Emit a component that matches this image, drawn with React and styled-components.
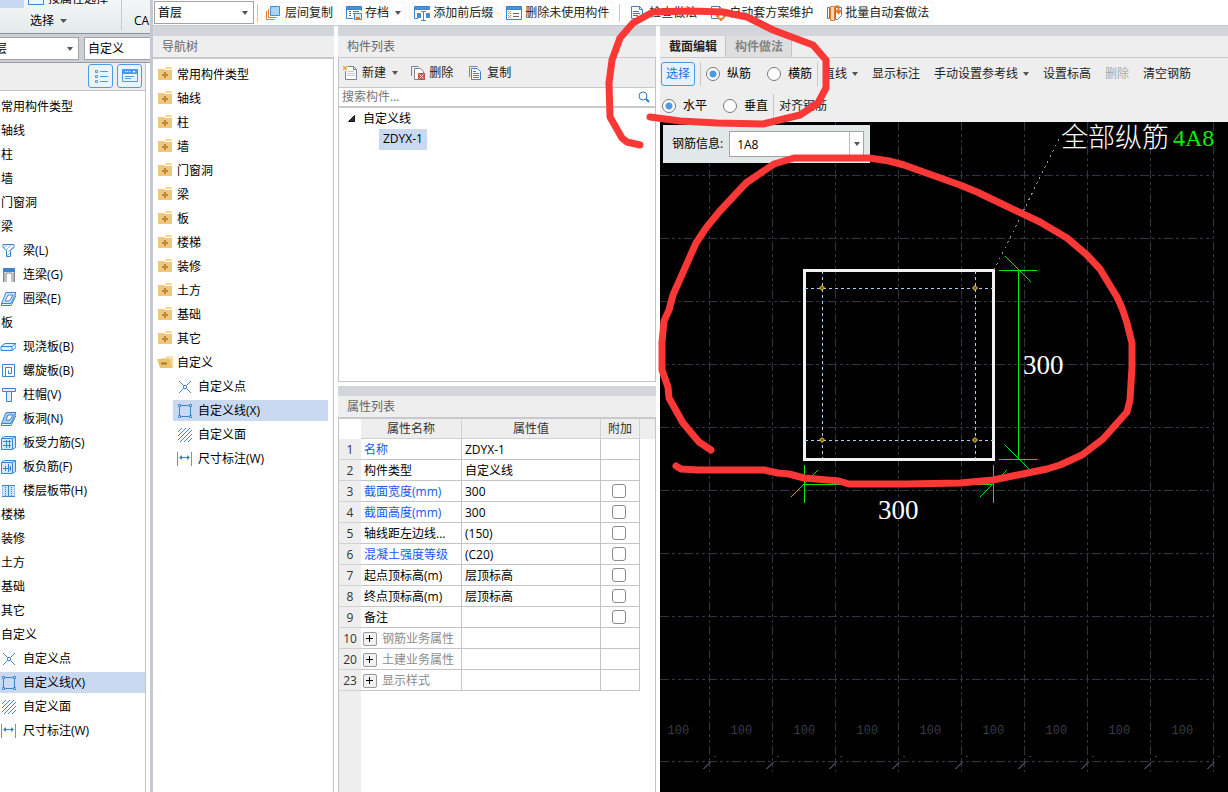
import { useState } from "react";
import styled, { createGlobalStyle } from "styled-components";

const GlobalStyle = createGlobalStyle`
  * {
    box-sizing: border-box;
  }
  body {
    margin: 0;
    overflow: hidden;
  }
  body, button, input, select, table {
    font-family: "Open Sans", "Noto Sans CJK SC", sans-serif;
    font-size: 12px;
    line-height: 18px;
    color: #000;
  }
  ul {
    margin: 0;
    padding: 0;
    list-style: none;
  }
  svg {
    display: block;
    flex: none;
  }
`;

const Desktop = styled.div`
  position: relative;
  display: grid;
  grid-template-columns: 150px 1fr;
  height: 100vh;
  background: #fff;
  overflow: hidden;
`;

/* ---------- shared parts ---------- */

const SelectWrap = styled.div`
  display: grid;
  grid-template-columns: 1fr ${(props) => (props.$split ? "14px" : "11px")};
  align-items: center;
  width: ${(props) => props.$width}px;
  height: ${(props) => props.$height || 23}px;
  margin-left: ${(props) => props.$shift || 0}px;
  border: 1px solid #a3a3a3;
  background: #fff;
  flex: none;
  select {
    grid-area: 1 / 1 / 2 / 3;
    appearance: none;
    width: 100%;
    height: 100%;
    border: 0;
    padding: ${(props) => (props.$split ? "2px 7px 0" : "0 3px")};
    background: transparent;
    outline: none;
  }
  > span {
    grid-area: 1 / 2 / 2 / 3;
    display: flex;
    align-items: center;
    justify-content: ${(props) => (props.$split ? "center" : "flex-start")};
    height: 100%;
    pointer-events: none;
    border-left: ${(props) => (props.$split ? "1px solid #bbb" : "0")};
  }
`;

const Arrow = ({ size = 6, color = "#555" }) => (
  <svg width={size} height="4" viewBox="0 0 6 4" preserveAspectRatio="none">
    <path d="M0 0h6L3 4z" fill={color} />
  </svg>
);

const Select = ({ label, value, ...rest }) => (
  <SelectWrap {...rest}>
    <select aria-label={label} defaultValue={value}>
      <option>{value}</option>
    </select>
    <span>
      <Arrow />
    </span>
  </SelectWrap>
);

const PlainButton = styled.button`
  display: flex;
  align-items: center;
  gap: ${(props) => props.$gap || 0}px;
  padding: 0;
  border: 0;
  background: none;
  white-space: nowrap;
  color: ${(props) => (props.disabled ? "#aaa" : "#222")};
`;

const Divider = styled.span`
  width: 1px;
  height: ${(props) => props.$height || 18}px;
  margin: 0 ${(props) => props.$space || 0}px;
  background: #c8c8c8;
  flex: none;
`;

/* ---------- icons ---------- */

const BLUE = "#3c84d0";

const Ico = ({ children, w = 16, h = 16 }) => (
  <svg width={w} height={h} viewBox={`0 0 ${w} ${h}`} fill="none" stroke={BLUE}>
    {children}
  </svg>
);

const FolderIcon = ({ open }) =>
  open ? (
    <Ico>
      <path d="M4 3h12v10H4z" fill="#f4d79b" stroke="none" />
      <path d="M9 1h7v2H9z" fill="#f7e3b8" stroke="none" />
      <path d="M0 4h13l2 9H3z" fill="#ecc271" stroke="none" />
      <path d="M4 8.500h6" stroke="#a8742a" strokeWidth="2" />
    </Ico>
  ) : (
    <Ico>
      <path d="M8 1l1-1h5l1 1v1H8z" fill="#f2d595" stroke="none" />
      <path d="M1 2h6l1 1h7v10H1z" fill="#eec77c" stroke="none" />
      <path d="M5 8h6M8 5v6" stroke="#bf8638" strokeWidth="2" />
    </Ico>
  );

const icons = {
  beam: (
    <Ico>
      <path d="M3 1.500h11v3l-3.500 3v6h-4v-6L3 4.500z" />
      <path d="M4 5l3-3M6 7l5-5M8 9l5-5M7 13l3-3" stroke="#8fbbe6" />
    </Ico>
  ),
  link: (
    <Ico>
      <path d="M3.500 15V2h11v13M6 15V6h6v9" stroke="#7d858f" />
      <path d="M4.500 15V4M13.500 15V4" stroke="#b3bac2" />
      <path d="M3.500 1.500h11v3h-11z" fill={BLUE} />
    </Ico>
  ),
  ring: (
    <Ico>
      <path d="M6 1.500h10l-5 11H1.500zM8 4h5l-3.500 6H5z" fill="#d6e7f8" fillRule="evenodd" />
      <path d="M1.500 12.500v2h9.500l5-10v-3" />
    </Ico>
  ),
  slab: (
    <Ico>
      <path d="M1 7.500l4-3h11l-4 3zM1 7.500v4h11v-4M12 11.500l4-3v-4" fill="#e2eefa" />
    </Ico>
  ),
  spiral: (
    <Ico>
      <path d="M2.500 1.500h12v12h-12z" />
      <path d="M5.500 13V4.500h6v6h-3V7.500" />
    </Ico>
  ),
  cap: (
    <Ico>
      <path d="M2.500 1.500h13v3h-4v10h-5v-10h-4z" fill="#e2eefa" />
      <path d="M6.500 4.500h5" />
    </Ico>
  ),
  hole: (
    <Ico>
      <path d="M6 1.500h10l-5 11H1.500zM8 4h5l-3 5H6z" fill="#a8cbee" fillRule="evenodd" />
      <path d="M1.500 12.500v2h9.500l5-10v-3" />
    </Ico>
  ),
  rebarS: (
    <Ico>
      <path d="M1.500 3.500l3-2h11v11l-3 2h-11z" fill="#d6e7f8" />
      <path d="M1.500 3.500h11v11M12.500 3.500l3-2M3 6.500h8M3 10.500h8M6.500 5v8M9.500 5v8" />
    </Ico>
  ),
  rebarF: (
    <Ico>
      <path d="M1.500 3.500l3-2h11v11l-3 2h-11z" fill="#d6e7f8" />
      <path d="M1.500 3.500h11v11M12.500 3.500l3-2M3 9.500h8M5.500 7v5M8.500 5v8M10.500 7v5" />
    </Ico>
  ),
  strip: (
    <Ico>
      <path d="M2.500 2.500h12v11h-12z" fill="#cfe3f7" stroke="#9cc3ea" />
      <path d="M2 2.500h13M2 13.500h13M8.500 3v10" />
      <path d="M5.500 4v9M11.500 4v9" strokeDasharray="1 1" />
    </Ico>
  ),
  point: (
    <Ico>
      <path d="M7.500 6.500h3v3h-3zM7 6L3 2M11 6l4-4M7 10l-4 4M11 10l4 4" />
    </Ico>
  ),
  line: (
    <Ico>
      <path d="M3.500 2.500h11v11h-11z" />
      <path
        d="M2.500 1.500h2v2h-2zM13.500 1.500h2v2h-2zM2.500 12.500h2v2h-2zM13.500 12.500h2v2h-2z"
        fill="#fff"
      />
    </Ico>
  ),
  area: (
    <Ico>
      <path d="M2 5l4-4M2 9l8-8M2 13l12-12M4 15L16 3M8 15l8-8M12 15l4-4" />
    </Ico>
  ),
  dim: (
    <Ico>
      <path d="M1.500 1v14M15.500 1v14" stroke="#8a8f96" />
      <path d="M4 6.500h9" />
      <path d="M6 4v5L3 6.500zM11 4v5l3-2.500z" fill={BLUE} stroke="none" />
    </Ico>
  ),
  copyLayer: (
    <Ico>
      <path d="M4.500 1.500h9v9h-9z" fill="#a9d3f8" stroke="#3f8ee0" />
      <path d="M2.500 4v8.500h8M.5 6v8.500h8" stroke="#e07b28" />
    </Ico>
  ),
  archive: (
    <Ico>
      <path d="M.5 1.500h15v3H.5z" fill="#4a90dc" />
      <path d="M.5 4v9.500H7M15.500 4v2" />
      <path d="M3 6.500h2M3 8.500h2M3 10.500h2M7 6.500h6M7 8.500h2" stroke="#5e6a78" />
      <path d="M8.500 8.500h7v6h-7z" fill="#dbe9f8" />
      <path d="M10 12h4v3h-4z" fill="#e07b28" stroke="none" />
    </Ico>
  ),
  affix: (
    <Ico>
      <path d="M.5 1.500h15v3H.5z" fill="#4a90dc" />
      <path d="M.5 4v9.500H4" />
      <path d="M3.500 8.500h3v4h-3zM12.500 8.500h3v4h-3z" fill="#4a90dc" />
      <path d="M9.500 7v8M7 6.500h5M7 15.500h5" />
    </Ico>
  ),
  unused: (
    <Ico>
      <path d="M.5 1.500h15v13H.5z" fill="#fff" />
      <path d="M.5 1.500h15v3H.5z" fill="#4a90dc" />
      <path d="M2 6l3 3M5 6L2 9M2 10l3 3M5 10l-3 3" stroke="#e8963c" />
      <path d="M7 8.500h6M7 11.500h6" stroke="#5e6a78" />
    </Ico>
  ),
  check: (
    <Ico>
      <path d="M1.500 1.500h8l3 3v9h-11zM9.500 1.500v3h3" fill="#fff" />
      <path d="M3 6.500h6M3 8.500h7M3 10.500h5" stroke="#5e6a78" />
      <path d="M7 11l3 3 4-5" stroke="#e07b28" strokeWidth="2" />
    </Ico>
  ),
  plan: (
    <Ico>
      <path d="M1.500 1.500h8l3 3v9h-11zM9.500 1.500v3h3" fill="#fff" />
      <path d="M3 6.500h4M3 8.500h4" stroke="#5e6a78" />
      <circle cx="11" cy="11" r="3" fill="#fff" stroke="#e8862e" strokeWidth="2" />
      <path d="M11 6v2M11 14v2M6 11h2M14 11h2" stroke="#e8862e" strokeWidth="2" />
    </Ico>
  ),
  batch: (
    <Ico>
      <path d="M1.500 2.500h2v11h-2zM9.500 2.500h6v8l-4 4h-2z" fill="#fff" />
      <path d="M4.500 1.500h4v14h-4z" fill="#fbd9bb" stroke="#e07b28" />
      <path d="M9 1.500h3.500V8M10 5.500L12.500 8 15 5.500" stroke="#e07b28" strokeWidth="2" />
    </Ico>
  ),
  create: (
    <Ico>
      <path d="M4.500 1.500h6l3 3v10h-11V6" fill="#fff" stroke="#7c8692" />
      <path d="M10.500 1.500v3h3" stroke="#7c8692" />
      <path d="M5 6.500h6M4 8.500h8M4 10.500h8" stroke="#c3c9d0" />
      <path d="M0 1l4 4M4 1L0 5M2 1v4M0 3h4" stroke="#eea23a" />
    </Ico>
  ),
  remove: (
    <Ico>
      <path d="M1.500 11V1.500h7" stroke="#7c8692" />
      <path d="M4.500 3.500h6l3 3v8h-9z" fill="#fff" stroke="#7c8692" />
      <path d="M8 8h7v7H8z" fill="#c8524c" stroke="none" />
      <path d="M9.500 9.500l4 4M13.500 9.500l-4 4" stroke="#fff" />
    </Ico>
  ),
  copy: (
    <Ico>
      <path d="M1.500 12V1.500h8" stroke="#7c8692" />
      <path d="M3.500 3.500h6l3 3v8h-9z" fill="#fff" />
      <path d="M5 6.500h3M5 8.500h6M5 10.500h6M5 12.500h6" />
    </Ico>
  ),
  search: (
    <Ico w={12} h={12}>
      <circle cx="5" cy="5" r="4" stroke="#2d7fc8" />
      <path d="M8 8l3 3" stroke="#2d7fc8" strokeWidth="2" />
    </Ico>
  ),
};

/* ---------- window on the left, partly covered ---------- */

const SideWindow = styled.aside`
  display: flex;
  flex-direction: column;
  overflow: hidden;
  min-width: 0;
`;

const Ribbon = styled.div`
  display: grid;
  grid-template-columns: 122px 1fr;
  height: 34px;
  border-bottom: 1px solid #8d9499;
  background: linear-gradient(#f3f7f8, #e4eaeb);
  overflow: hidden;
`;

const RibbonGroup = styled.div`
  display: flex;
  flex-direction: column;
  justify-content: flex-end;
  height: 30px;
  border-right: ${(props) => (props.$last ? 0 : 1)}px solid #c4cacc;
  white-space: nowrap;
`;

const RibbonTop = styled.div`
  display: flex;
  align-items: center;
  height: 18px;
  margin-bottom: 4px;
  gap: 4px;
`;

const RibbonActive = styled.span`
  width: 24px;
  height: 18px;
  background: #c8d7f1;
`;

const RibbonTitle = styled.div`
  display: flex;
  align-items: center;
  gap: 6px;
  padding-left: ${(props) => props.$pad}px;
`;

const SideFilters = styled.div`
  display: flex;
  gap: 5px;
  height: 29px;
  padding: 3px 0;
  background: #ccd0d6;
  border-bottom: 1px solid #979da3;
  overflow: hidden;
`;

const ViewSwitch = styled.div`
  display: flex;
  justify-content: flex-end;
  gap: 4px;
  width: 146px;
  height: 28px;
  padding: 1px 3px 2px;
  background: #eee;
  border-right: 1px solid #c4c4c8;
  border-bottom: 1px solid #c4c4c8;
`;

const ViewButton = styled.button`
  display: grid;
  place-items: center;
  width: 25px;
  height: 24px;
  padding: 0;
  border: 1px solid #4b9bea;
  border-radius: 3px;
  background: #e9f4fe;
`;

const SideList = styled.ul`
  flex: 1;
  width: 146px;
  padding-top: 5px;
  border-right: 1px solid #c4c4c8;
`;

const SideRow = styled.li`
  display: flex;
  align-items: center;
  gap: 7px;
  height: 21px;
  margin-bottom: 3px;
  padding-left: ${(props) => (props.$icon ? 0 : 1)}px;
  white-space: nowrap;
  background: ${(props) => (props.$selected ? "#c9d9f2" : "none")};
`;

const sideItems = [
  ["常用构件类型"],
  ["轴线"],
  ["柱"],
  ["墙"],
  ["门窗洞"],
  ["梁"],
  ["梁(L)", "beam"],
  ["连梁(G)", "link"],
  ["圈梁(E)", "ring"],
  ["板"],
  ["现浇板(B)", "slab"],
  ["螺旋板(B)", "spiral"],
  ["柱帽(V)", "cap"],
  ["板洞(N)", "hole"],
  ["板受力筋(S)", "rebarS"],
  ["板负筋(F)", "rebarF"],
  ["楼层板带(H)", "strip"],
  ["楼梯"],
  ["装修"],
  ["土方"],
  ["基础"],
  ["其它"],
  ["自定义"],
  ["自定义点", "point"],
  ["自定义线(X)", "line"],
  ["自定义面", "area"],
  ["尺寸标注(W)", "dim"],
];

const Side = () => (
  <SideWindow>
    <Ribbon>
      <RibbonGroup>
        <RibbonTop>
          <RibbonActive />
          <Ico>
            <path d="M.5.500h15v13H.5z" />
          </Ico>
          按属性选择
        </RibbonTop>
        <RibbonTitle $pad={30}>
          选择 <Arrow size={7} />
        </RibbonTitle>
      </RibbonGroup>
      <RibbonGroup $last>
        <RibbonTitle $pad={12}>CA</RibbonTitle>
      </RibbonGroup>
    </Ribbon>
    <SideFilters>
      <Select label="楼层" value="首层" $width={100} $shift={-21} />
      <Select label="构件" value="自定义" $width={100} />
    </SideFilters>
    <ViewSwitch>
      <ViewButton aria-label="列表">
        <Ico w={14} h={14}>
          <path
            d="M1.500 1.500h2v2h-2zM1.500 6.500h2v2h-2zM1.500 11.500h2v2h-2z"
            stroke="#4b9bea"
          />
          <path d="M6 2.500h8M6 7.500h8M6 12.500h8" stroke="#4b9bea" />
        </Ico>
      </ViewButton>
      <ViewButton aria-label="窗口">
        <Ico>
          <path d="M.5 1.500h15v12H.5z" stroke="#4b9bea" />
          <path d="M1 2h14v4H1z" fill="#4b9bea" stroke="none" />
          <path d="M3 3.500h5" stroke="#fff" strokeDasharray="1 1" />
          <path d="M10.500 3h3l-1.500 2z" fill="#fff" stroke="none" />
          <path d="M3 8.500h9M3 10.500h6" stroke="#4b9bea" />
        </Ico>
      </ViewButton>
    </ViewSwitch>
    <SideList>
      {sideItems.map(([text, icon]) => (
        <SideRow key={text} $icon={icon} $selected={icon === "line"}>
          {icon && icons[icon]}
          {text}
        </SideRow>
      ))}
    </SideList>
  </SideWindow>
);

/* ---------- main window ---------- */

const MainWindow = styled.main`
  display: flex;
  flex-direction: column;
  min-width: 0;
  border-left: 3px solid #c5c8d0;
  background: #fff;
`;

const TopBar = styled.header`
  display: flex;
  align-items: center;
  gap: 3px;
  height: 26px;
  padding-left: 1px;
  border-bottom: 1px solid #c9c9cf;
`;

const TopButton = styled(PlainButton)`
  height: 21px;
  padding: 0 5px;
  border-radius: 3px;
  box-shadow: inset 0 0 0 1px #f7f7f7;
`;

const Workspace = styled.div`
  flex: 1;
  display: grid;
  grid-template-columns: 181px 318px 1fr;
  gap: 4px;
  min-height: 0;
`;

const Panel = styled.section`
  display: flex;
  flex-direction: column;
  min-width: 0;
  min-height: 0;
  border-top: 10px solid #d4d4db;
`;

const PanelTitle = styled.h2`
  margin: 0;
  height: ${(props) => (props.$thick ? 23 : 22)}px;
  padding: 1px 9px 0;
  border-bottom: ${(props) => (props.$thick ? 2 : 1)}px solid #c8c8ce;
  background: #eee;
  color: #666;
  font-size: 12px;
  font-weight: 400;
  line-height: 20px;
`;

const NavTree = styled.ul`
  flex: 1;
  padding: 5px 5px 0 4px;
  border-right: 1px solid #c4c4c8;
`;

const NavRow = styled.li`
  display: flex;
  align-items: center;
  gap: ${(props) => (props.$child ? 6 : 4)}px;
  height: 21px;
  margin: 0 0 3px ${(props) => (props.$child ? 16 : 0)}px;
  padding-left: ${(props) => (props.$child ? 3 : 0)}px;
  background: ${(props) => (props.$selected ? "#c9d9f2" : "none")};
`;

const navItems = [
  "常用构件类型",
  "轴线",
  "柱",
  "墙",
  "门窗洞",
  "梁",
  "板",
  "楼梯",
  "装修",
  "土方",
  "基础",
  "其它",
];
const customItems = sideItems.slice(-4);

const Middle = styled.div`
  display: grid;
  grid-template-rows: 356px 1fr;
  gap: 4px;
  min-height: 0;
`;

const PanelBody = styled.div`
  flex: 1;
  border: solid #c4c4c8;
  border-width: 0 1px ${(props) => (props.$closed ? 1 : 0)}px;
  background: ${(props) =>
    props.$gutter ? "linear-gradient(to right, #eee 22px, #fff 22px)" : "#fff"};
`;

const ListTools = styled.div`
  display: flex;
  align-items: center;
  gap: 12px;
  height: 30px;
  padding-left: 4px;
  border-bottom: 1px solid #c8c8ce;
  background: #eee;
`;

const SearchBox = styled.label`
  display: flex;
  align-items: center;
  height: 20px;
  padding: 0 5px 0 3px;
  border-bottom: 2px solid #c8c8ce;
  input {
    flex: 1;
    min-width: 0;
    height: 18px;
    border: 0;
    padding: 0;
    outline: none;
  }
  input::placeholder {
    color: #757575;
  }
`;

const TreeRow = styled.li`
  display: flex;
  align-items: center;
  gap: 8px;
  height: 21px;
  padding-left: ${(props) => (props.$child ? 40 : 9)}px;
`;

const TreeSelected = styled.span`
  height: 21px;
  padding: 1px 4px;
  background: #c9d9f2;
`;

const PropTable = styled.table`
  width: 100%;
  table-layout: fixed;
  border-spacing: 0;
  th,
  td {
    height: 21px;
    padding: 2px 0 0;
    font-weight: 400;
    line-height: 18px;
    white-space: nowrap;
    overflow: hidden;
  }
  thead th {
    height: 20px;
    padding: 1px 0 0;
    background: #eee;
    color: #333;
    border-right: 1px solid #d2d2d6;
    border-bottom: 1px solid #d2d2d6;
  }
  thead th:first-child {
    background: #fff;
    border: 0;
  }
  thead th:last-child {
    border: 0;
  }
  tbody th {
    background: #eee;
    color: #333;
    border-bottom: 1px solid #d2d2d6;
  }
  tbody td {
    border-right: 1px solid #c4c4cc;
    border-bottom: 1px solid #c4c4cc;
    padding-left: 3px;
  }
  tbody td:nth-child(4) {
    padding: 0 2px 0 0;
  }
  tbody td:last-child {
    border: 0;
  }
`;

const PropName = styled.span`
  display: flex;
  align-items: center;
  gap: 5px;
  color: ${(props) => props.$color};
`;

const Expander = styled.button`
  display: grid;
  place-items: center;
  width: 14px;
  height: 14px;
  margin-left: -1px;
  padding: 0;
  border: 1px solid #999;
  border-radius: 2px;
  background: #f2f2f2;
`;

const Tick = styled.input`
  appearance: none;
  display: block;
  width: 14px;
  height: 14px;
  margin: 0 auto;
  border: 1px solid #8a8a8a;
  border-radius: 3px;
  background: #fff;
  &:checked {
    background: #4b9bea;
  }
`;

const props = [
  { no: 1, name: "名称", value: "ZDYX-1", kind: "key" },
  { no: 2, name: "构件类型", value: "自定义线" },
  { no: 3, name: "截面宽度(mm)", value: "300", kind: "key", tick: true },
  { no: 4, name: "截面高度(mm)", value: "300", kind: "key", tick: true },
  { no: 5, name: "轴线距左边线...", value: "(150)", tick: true },
  { no: 6, name: "混凝土强度等级", value: "(C20)", kind: "key", tick: true },
  { no: 7, name: "起点顶标高(m)", value: "层顶标高", tick: true },
  { no: 8, name: "终点顶标高(m)", value: "层顶标高", tick: true },
  { no: 9, name: "备注", value: "", tick: true },
  { no: 10, name: "钢筋业务属性", kind: "group" },
  { no: 20, name: "土建业务属性", kind: "group" },
  { no: 23, name: "显示样式", kind: "group" },
];
const nameColors = { key: "#1459f5", group: "#8c8c8c" };

/* ---------- section editor ---------- */

const Tabs = styled.div`
  display: flex;
  height: 22px;
  background: #eee;
  border-bottom: 1px solid #c8c8ce;
`;

const Tab = styled.button`
  padding: 0 8px 0 9px;
  border: 0;
  border-right: 1px solid #c4c4c8;
  background: ${(props) => (props.$active ? "#eee" : "#dedede")};
  color: ${(props) => (props.$active ? "#222" : "#858585")};
  font-weight: 700;
`;

const EditorTools = styled.div`
  display: flex;
  align-items: center;
  gap: 5px;
  height: 32px;
  padding-left: ${(props) => props.$pad}px;
  background: #eee;
  overflow: hidden;
`;

const Group = styled.div`
  display: flex;
  align-items: center;
  gap: ${(props) => props.$gap}px;
`;

const PickButton = styled.button`
  width: 34px;
  height: 24px;
  padding: 0;
  border: 1px solid #4b9bea;
  border-radius: 3px;
  background: #e6f2fe;
  color: #1b74d8;
`;

const RadioLabel = styled.label`
  display: flex;
  align-items: center;
  gap: 7px;
  white-space: nowrap;
  input {
    appearance: none;
    width: 14px;
    height: 14px;
    margin: 0;
    border: 1px solid #777;
    border-radius: 50%;
    background: #fff;
  }
  input:checked {
    background: radial-gradient(circle, #4b9bea 3px, #fff 4px);
  }
`;

const CanvasArea = styled.div`
  position: relative;
  flex: 1;
  min-height: 0;
  background: #000;
  overflow: hidden;
`;

const RebarInfo = styled.label`
  position: absolute;
  left: 3px;
  top: 3px;
  display: flex;
  align-items: center;
  gap: 6px;
  height: 38px;
  padding: 0 6px 0 9px;
  background: #e2e8ea;
  white-space: nowrap;
`;

const Sheet = styled.svg`
  width: 100%;
  height: 100%;
  shape-rendering: crispEdges;
  .grid {
    stroke: #2f3642;
    stroke-dasharray: 9 3 3 3 3 3;
  }
  .tickText {
    font: 12px "Liberation Mono", monospace;
    fill: #363d49;
  }
  .size {
    font: 27px "Liberation Serif", serif;
    fill: #fff;
  }
  .name {
    font: 27px "Noto Sans CJK SC", sans-serif;
    font-weight: 300;
    fill: #fff;
  }
  .code {
    font: 24px "Liberation Serif", serif;
    fill: #00f000;
  }
`;

const columns = [0, 1, 2, 3, 4, 5, 6, 7, 8].map((n) => 49.5 + n * 63);
const rows = [0, 1, 2, 3, 4, 5, 6, 7, 8].map((n) => 53.5 + n * 63);

const SectionSheet = () => (
  <Sheet>
    {columns.map((x) => (
      <g key={x}>
        <path className="grid" d={`M${x} 0V650`} />
        <path d={`M${x - 6} 647l7-7M${x + 5} 635l1-1`} stroke="#3a4250" />
        <text className="tickText" x={x - 42} y="612">
          100
        </text>
      </g>
    ))}
    {rows.map((y) => (
      <path key={y} className="grid" d={`M0 ${y}H554`} />
    ))}
    <path className="grid" d="M0 639.500H554" />

    <path d="M144.500 148.500h189v189h-189z" fill="none" stroke="#f2f2f2" strokeWidth="3" />
    <path
      d="M145 166.500h188M145 318.500h188M162.500 149v188M315.500 149v188"
      stroke="#a9cdf5"
      strokeDasharray="3 3"
    />
    {[162, 315].map((x) =>
      [166, 318].map((y) => (
        <path
          key={x + "-" + y}
          d={`M${x - 2.5} ${y}l2.500-2.500 2.500 2.500-2.500 2.500z`}
          fill="#8a5a1c"
          stroke="#f5cf3a"
          shapeRendering="auto"
        />
      ))
    )}
    <path d="M334 148L400 15" stroke="#999" strokeDasharray="2 4" />

    {/* dimension lines */}
    <g stroke="#00e800" fill="none">
      <path d="M339 148.500h38M339 337.500h38M358.500 148v189" />
      <path d="M345 134l26 26M345 323l26 26" />
      <path d="M144.500 343v38M333.500 343v38M144 362.500h189" />
      <path d="M131 375l27-27M320 375l27-27" />
    </g>
    <text className="size" x="363" y="252">
      300
    </text>
    <text className="size" x="218" y="397">
      300
    </text>
    <text className="name" x="401" y="25">
      全部纵筋
    </text>
    <text className="code" x="513" y="24">
      4A8
    </text>
  </Sheet>
);

const Markup = styled.svg`
  position: absolute;
  left: 0;
  top: 0;
  width: 100%;
  height: 100%;
  pointer-events: none;
  fill: none;
  stroke: #fc3836;
  stroke-width: 7;
  stroke-linecap: round;
  stroke-linejoin: round;
`;

const App = () => {
  const [bar, setBar] = useState("纵筋");
  const [dir, setDir] = useState("水平");

  const radio = (name, text, value, setValue) => (
    <RadioLabel>
      <input
        type="radio"
        name={name}
        checked={value === text}
        onChange={() => setValue(text)}
      />
      {text}
    </RadioLabel>
  );

  return (
    <Desktop>
      <GlobalStyle />
      <Side />
      <MainWindow>
        <TopBar>
          <Select label="当前楼层" value="首层" $width={100} />
          <Divider />
          <TopButton $gap={3}>{icons.copyLayer}层间复制</TopButton>
          <TopButton $gap={3}>
            {icons.archive}存档
            <Group $gap={0}>
              &nbsp;
              <Arrow />
            </Group>
          </TopButton>
          <TopButton $gap={3}>{icons.affix}添加前后缀</TopButton>
          <TopButton $gap={3}>{icons.unused}删除未使用构件</TopButton>
          <Divider $space={2} />
          <TopButton $gap={3}>{icons.check}检查做法</TopButton>
          <TopButton $gap={3}>{icons.plan}自动套方案维护</TopButton>
          <TopButton $gap={3}>{icons.batch}批量自动套做法</TopButton>
        </TopBar>
        <Workspace>
          <Panel>
            <PanelTitle $thick>导航树</PanelTitle>
            <NavTree>
              {navItems.map((text) => (
                <NavRow key={text}>
                  <FolderIcon />
                  {text}
                </NavRow>
              ))}
              <NavRow>
                <FolderIcon open />
                自定义
              </NavRow>
              {customItems.map(([text, icon]) => (
                <NavRow key={text} $child $selected={icon === "line"}>
                  {icons[icon]}
                  {text}
                </NavRow>
              ))}
            </NavTree>
          </Panel>

          <Middle>
            <Panel>
              <PanelTitle>构件列表</PanelTitle>
              <PanelBody $closed>
                <ListTools>
                  <PlainButton $gap={3}>
                    {icons.create}新建
                    <Group $gap={0}>
                      &nbsp;
                      <Arrow />
                    </Group>
                  </PlainButton>
                  <PlainButton $gap={3}>{icons.remove}删除</PlainButton>
                  <PlainButton $gap={3}>
                    <Group $gap={0}>&nbsp;{icons.copy}</Group>复制
                  </PlainButton>
                </ListTools>
                <SearchBox>
                  <input aria-label="搜索构件" placeholder="搜索构件..." />
                  {icons.search}
                </SearchBox>
                <ul>
                  <TreeRow>
                    <svg width="7" height="7" viewBox="0 0 7 7">
                      <path d="M6.500 0.500v6h-6z" fill="#333" stroke="#111" />
                    </svg>
                    自定义线
                  </TreeRow>
                  <TreeRow $child>
                    <TreeSelected>ZDYX-1</TreeSelected>
                  </TreeRow>
                </ul>
              </PanelBody>
            </Panel>

            <Panel>
              <PanelTitle $thick>属性列表</PanelTitle>
              <PanelBody $gutter>
                <PropTable>
                  <colgroup>
                    <col width="22" />
                    <col width="101" />
                    <col width="139" />
                    <col width="39" />
                    <col />
                  </colgroup>
                  <thead>
                    <tr>
                      <th />
                      <th>属性名称</th>
                      <th>属性值</th>
                      <th>附加</th>
                      <th />
                    </tr>
                  </thead>
                  <tbody>
                    {props.map((p) => (
                      <tr key={p.no}>
                        <th>{p.no}</th>
                        <td>
                          <PropName $color={nameColors[p.kind] || "#000"}>
                            {p.kind === "group" && (
                              <Expander aria-label={"展开" + p.name}>
                                <svg width="8" height="8" viewBox="0 0 8 8">
                                  <path d="M0 3.500h7M3.500 0v7" stroke="#000" />
                                </svg>
                              </Expander>
                            )}
                            {p.name}
                          </PropName>
                        </td>
                        <td>{p.value}</td>
                        <td>
                          {p.tick && <Tick type="checkbox" aria-label={p.name + "附加"} />}
                        </td>
                        <td />
                      </tr>
                    ))}
                  </tbody>
                </PropTable>
              </PanelBody>
            </Panel>
          </Middle>

          <Panel>
            <Tabs>
              <Tab $active>截面编辑</Tab>
              <Tab>构件做法</Tab>
            </Tabs>
            <EditorTools $pad={1}>
              <PickButton>选择</PickButton>
              <Divider $height={24} />
              <Group $gap={16}>
                {radio("bar", "纵筋", bar, setBar)}
                {radio("bar", "横筋", bar, setBar)}
              </Group>
              <Divider $height={24} />
              <Group $gap={14}>
                <PlainButton $gap={5}>
                  直线 <Arrow />
                </PlainButton>
                <PlainButton>显示标注</PlainButton>
                <PlainButton $gap={5}>
                  手动设置参考线 <Arrow />
                </PlainButton>
                <PlainButton>设置标高</PlainButton>
                <PlainButton disabled>删除</PlainButton>
                <PlainButton>清空钢筋</PlainButton>
              </Group>
            </EditorTools>
            <EditorTools $pad={2}>
              <Group $gap={16}>
                {radio("dir", "水平", dir, setDir)}
                {radio("dir", "垂直", dir, setDir)}
              </Group>
              <Divider $height={24} />
              <PlainButton>对齐钢筋</PlainButton>
            </EditorTools>
            <CanvasArea>
              <SectionSheet />
              <RebarInfo>
                钢筋信息:
                <Select label="钢筋信息" value="1A8" $width={135} $height={26} $split />
              </RebarInfo>
            </CanvasArea>
          </Panel>
        </Workspace>
      </MainWindow>
      {/* red pen strokes drawn over the windows */}
      <Markup>
        <path d="M640 145L627 142 622 138 610 117 609 83 612 60 620 38 633 23 653 12 690 11 723 12 747 17 773 30 813 45 826 60 826 88 818 103 800 115 763 124 717 123 680 121 650 117" />
        <path d="M711 450L699 442 683 423 669 398 668 387 662 370 662 342 664 321 669 310 673 295 696 243 706 228 719 212 746 183 774 164 794 158 869 158 889 161 904 165 960 185 977 192 1000 203 1040 222 1067 238 1087 255 1100 269 1117 297 1122 308 1127 323 1132 343 1132 367 1130 400 1127 412 1103 439 1082 455 1060 465 1047 469 993 480 960 483 906 484 849 484 839 481 804 478 789 474 778 473 764 470 698 470 681 469 676 466" />
      </Markup>
    </Desktop>
  );
};

export default App;
